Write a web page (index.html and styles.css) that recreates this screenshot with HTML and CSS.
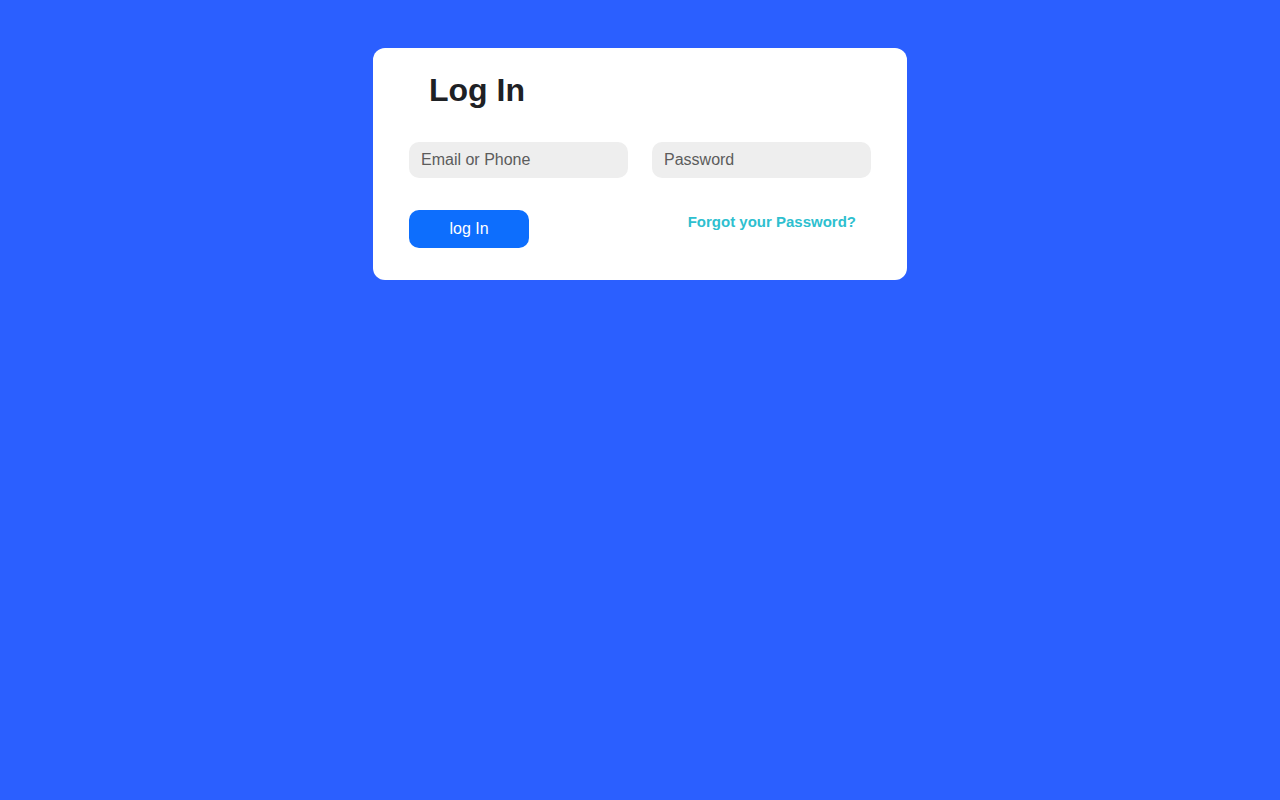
FILE: index.html
```html
<!DOCTYPE html>
<html lang="en">
<head>
<meta charset="utf-8">
<title>Log In</title>
<link rel="stylesheet" href="styles.css">
</head>
<body>
  <main class="card">
    <h1 class="title">Log In</h1>
    <div class="fields">
      <input class="field" type="text" placeholder="Email or Phone">
      <input class="field" type="password" placeholder="Password">
    </div>
    <div class="actions">
      <button class="btn" type="button">log In</button>
      <a class="forgot" href="#">Forgot your Password?</a>
    </div>
  </main>
</body>
</html>
```

FILE: styles.css
```css
html, body {
  margin: 0;
  padding: 0;
}
body {
  background: #2b5fff;
  font-family: "Liberation Sans", Arial, sans-serif;
  min-height: 100vh;
}
.card {
  box-sizing: border-box;
  width: 534px;
  margin: 48px auto 0;
  background: #ffffff;
  border-radius: 12px;
  padding: 24px 36px 32px;
}
.title {
  margin: 0 0 0 20px;
  font-size: 32px;
  line-height: 37px;
  font-weight: 700;
  color: #1e2125;
}
.fields {
  display: grid;
  grid-template-columns: minmax(0, 1fr) minmax(0, 1fr);
  column-gap: 24px;
  margin-top: 33px;
}
.field {
  box-sizing: border-box;
  width: 100%;
  min-width: 0;
  height: 36px;
  border: none;
  outline: none;
  border-radius: 10px;
  background: #eeeeee;
  padding: 0 12px;
  font-family: "Liberation Sans", Arial, sans-serif;
  font-size: 16px;
  color: #333;
}
.field::placeholder {
  color: #5c5c5c;
  opacity: 1;
}
.actions {
  display: flex;
  justify-content: space-between;
  align-items: flex-start;
  margin-top: 32px;
}
.btn {
  width: 120px;
  height: 38px;
  border: none;
  border-radius: 10px;
  background: #0d6efd;
  color: #ffffff;
  font-family: "Liberation Sans", Arial, sans-serif;
  font-size: 16px;
  padding: 0;
  cursor: pointer;
}
.forgot {
  margin-top: 3px;
  margin-right: 15px;
  font-size: 15px;
  font-weight: 700;
  color: #2ebfcf;
  text-decoration: none;
}
```
